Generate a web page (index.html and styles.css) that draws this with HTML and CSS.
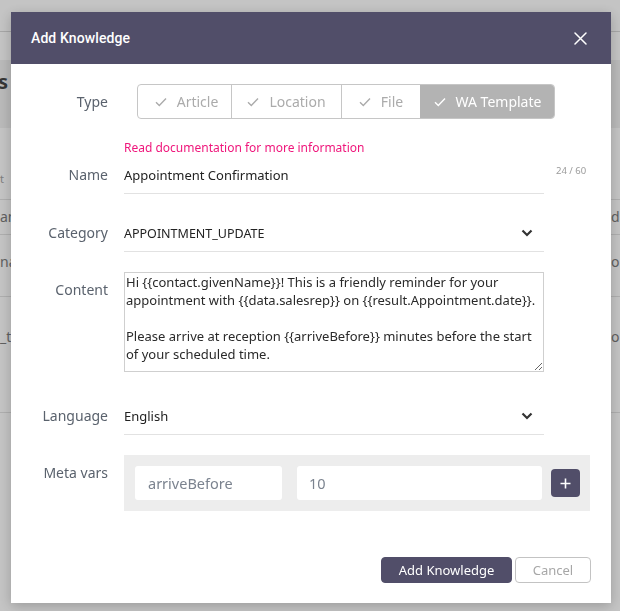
FILE: index.html
```html
<!DOCTYPE html>
<html lang="en">
<head>
<meta charset="utf-8">
<title>Add Knowledge</title>
<link rel="stylesheet" href="styles.css">
</head>
<body>
<div class="page">
  <div class="topbar"></div>
  <div class="page-head">
    <div class="page-head-inner"><h1 class="page-title">Bases</h1></div>
  </div>
  <div class="bg-row bg-row--head"><span class="bg-left bg-muted">t</span></div>
  <div class="bg-row bg-row--a"><span class="bg-left">ann</span><span class="bg-right">d.</span></div>
  <div class="bg-row bg-row--b"><span class="bg-left">nam</span><span class="bg-right">or</span></div>
  <div class="bg-row bg-row--c"><span class="bg-left">_te</span><span class="bg-right">or</span></div>
</div>

<div class="overlay">
  <div class="modal">
    <div class="modal-header">
      <h2 class="modal-title">Add Knowledge</h2>
      <button class="close-btn" type="button" aria-label="Close">
        <svg width="13" height="13" viewBox="0 0 13 13"><path d="M1 1L12 12M12 1L1 12" stroke="#fff" stroke-width="1.5" fill="none" stroke-linecap="round"/></svg>
      </button>
    </div>

    <div class="modal-body">
      <div class="row row--type">
        <span class="label label--type">Type</span>
        <div class="segments">
          <span class="seg seg--article"><svg class="check" width="12" height="10" viewBox="0 0 12 10"><path d="M1 5.2L4.3 8.5L11 1.5" stroke="currentColor" stroke-width="1.4" fill="none"/></svg>Article</span>
          <span class="seg seg--location"><svg class="check" width="12" height="10" viewBox="0 0 12 10"><path d="M1 5.2L4.3 8.5L11 1.5" stroke="currentColor" stroke-width="1.4" fill="none"/></svg>Location</span>
          <span class="seg seg--file"><svg class="check" width="12" height="10" viewBox="0 0 12 10"><path d="M1 5.2L4.3 8.5L11 1.5" stroke="currentColor" stroke-width="1.4" fill="none"/></svg>File</span>
          <span class="seg seg--wa seg--active"><svg class="check" width="12" height="10" viewBox="0 0 12 10"><path d="M1 5.2L4.3 8.5L11 1.5" stroke="currentColor" stroke-width="1.4" fill="none"/></svg>WA Template</span>
        </div>
      </div>

      <div class="row row--hint">
        <span class="label"></span>
        <a class="doc-link" href="#">Read documentation for more information</a>
      </div>

      <div class="row">
        <span class="label">Name</span>
        <div class="field"><span class="field-value">Appointment Confirmation</span></div>
        <span class="counter">24 / 60</span>
      </div>

      <div class="row row--category">
        <span class="label">Category</span>
        <div class="field field--select">
          <span class="field-value field-value--caps">APPOINTMENT_UPDATE</span>
          <svg class="chevron" width="12" height="8" viewBox="0 0 12 8"><path d="M1.5 1.5L6 6L10.5 1.5" stroke="#333" stroke-width="2.2" fill="none"/></svg>
        </div>
      </div>

      <div class="row row--content">
        <span class="label">Content</span>
        <textarea class="content-area">Hi {{contact.givenName}}! This is a friendly reminder for your appointment with {{data.salesrep}} on {{result.Appointment.date}}.

Please arrive at reception {{arriveBefore}} minutes before the start of your scheduled time.</textarea>
      </div>

      <div class="row row--language">
        <span class="label">Language</span>
        <div class="field field--select">
          <span class="field-value">English</span>
          <svg class="chevron" width="12" height="8" viewBox="0 0 12 8"><path d="M1.5 1.5L6 6L10.5 1.5" stroke="#333" stroke-width="2.2" fill="none"/></svg>
        </div>
      </div>

      <div class="row row--meta">
        <span class="label">Meta vars</span>
        <div class="meta">
          <div class="meta-input meta-input--key">arriveBefore</div>
          <div class="meta-input meta-input--value">10</div>
          <button class="add-btn" type="button" aria-label="Add">
            <svg width="11" height="11" viewBox="0 0 11 11"><path d="M5.5 0.5V10.5M0.5 5.5H10.5" stroke="#fff" stroke-width="1.6" fill="none"/></svg>
          </button>
        </div>
      </div>
    </div>

    <div class="modal-footer">
      <button class="btn btn-primary" type="button">Add Knowledge</button>
      <button class="btn btn-secondary" type="button">Cancel</button>
    </div>
  </div>
</div>
</body>
</html>
```

FILE: styles.css
```css
* { box-sizing: border-box; }

html, body {
  margin: 0;
  padding: 0;
}

body {
  width: 620px;
  height: 611px;
  overflow: hidden;
  position: relative;
  background: #ffffff;
  font-family: "Noto Sans", "Open Sans", sans-serif;
}

/* ---------- background page ---------- */
.page {
  width: 620px;
}

.topbar {
  height: 32px;
  border-bottom: 1px solid #d9d9d9;
}

.page-head {
  margin-top: 28px;
  height: 68px;
  background: #f2f2f2;
  padding-top: 8px;
}

.page-head-inner {
  width: 8px;
  display: flex;
  justify-content: flex-end;
}

.page-title {
  margin: 0;
  white-space: nowrap;
  font-size: 20px;
  line-height: 28px;
  font-weight: 700;
  color: #474747;
}

.bg-row {
  display: flex;
  border-bottom: 1px solid #e3e3e3;
  font-size: 14px;
  color: #7d7d7d;
  white-space: nowrap;
}

.bg-left { width: 611px; flex: none; overflow: visible; }
.bg-right { flex: none; }
.bg-muted { font-size: 11px; color: #a3a3a3; }

.bg-row--head { height: 72px; padding-top: 43px; }
.bg-row--a { height: 35px; padding-top: 7px; }
.bg-row--b { height: 62px; padding-top: 17px; }
.bg-row--c { height: 116px; padding-top: 30px; }

/* ---------- overlay + modal ---------- */
.overlay {
  position: fixed;
  inset: 0;
  background: rgba(0, 0, 0, 0.23);
  padding: 12px 0 0 11px;
}

.modal {
  width: 600px;
  background: #ffffff;
  box-shadow: 0 3px 12px rgba(0, 0, 0, 0.22);
}

.modal-header {
  height: 52px;
  background: #514e69;
  display: flex;
  align-items: center;
  justify-content: space-between;
  padding: 0 24px 0 20px;
}

.modal-title {
  margin: 0;
  font-family: Roboto, "Noto Sans", sans-serif;
  font-weight: 500;
  font-size: 14px;
  letter-spacing: 0.1px;
  color: #ffffff;
}

.close-btn {
  border: 0;
  background: none;
  padding: 0;
  width: 13px;
  height: 13px;
  display: flex;
}

.modal-body {
  padding: 20px 21px 0 0;
}

.row {
  display: flex;
  align-items: flex-start;
}

.label {
  width: 97px;
  flex: none;
  margin-right: 16px;
  text-align: right;
  line-height: 36px;
  font-size: 14px;
  color: #5a626d;
}

.label--type { line-height: 35px; }

/* type segments */
.segments {
  display: flex;
  height: 35px;
  margin-left: 13px;
  border: 1px solid #c6c6c6;
  border-radius: 4px;
  overflow: hidden;
}

.seg {
  display: flex;
  align-items: center;
  justify-content: center;
  font-size: 14px;
  color: #ababab;
  border-left: 1px solid #c6c6c6;
}

.seg:first-child { border-left: 0; }

.seg--article { width: 93px; padding-left: 4px; }
.seg--location { width: 110px; }
.seg--file { width: 79px; }
.seg--wa { width: 134px; }

.seg--active {
  background: #b3b3b3;
  color: #ffffff;
  border-left-color: #b3b3b3;
}

.check {
  margin-right: 10px;
  flex: none;
}

/* hint link */
.row--hint { margin-top: 20px; }

.doc-link {
  font-size: 12px;
  line-height: 18px;
  color: #ef167b;
  text-decoration: none;
}

/* text fields */
.field {
  width: 420px;
  height: 37px;
  flex: none;
  display: flex;
  align-items: center;
  justify-content: space-between;
  border-bottom: 1px solid #e2e2e2;
}

.field-value {
  font-size: 13px;
  color: #222222;
}

.field-value--caps { font-size: 12.5px; }

.field--select { padding-right: 11px; }

.counter {
  margin-left: 12px;
  margin-top: 8px;
  line-height: 12px;
  font-size: 9.5px;
  color: #9b9b9b;
}

.row--category { margin-top: 21px; }
.row--content { margin-top: 20px; }
.row--language { margin-top: 26px; }
.row--meta { margin-top: 20px; }

.content-area {
  display: block;
  width: 420px;
  height: 100px;
  margin: 0;
  border: 1px solid #cfcfcf;
  border-radius: 0;
  padding: 0 1px;
  font-family: "Noto Sans", "Open Sans", sans-serif;
  font-size: 13px;
  line-height: 18px;
  color: #2a2a2a;
  resize: vertical;
  overflow: hidden;
}

/* meta vars */
.meta {
  flex: 1;
  height: 56px;
  background: #ededed;
  display: flex;
  align-items: center;
  gap: 9px;
  padding: 0 10px 0 11px;
}

.meta-input {
  height: 34px;
  background: #ffffff;
  border-radius: 3px;
  display: flex;
  align-items: center;
  padding: 0 13px;
  font-size: 14.5px;
  color: #7b838f;
}

.meta-input--key {
  width: 147px;
  margin-right: 6px;
}

.meta-input--value {
  flex: 1;
  padding-left: 12px;
}

.add-btn {
  width: 29px;
  height: 28px;
  flex: none;
  border: 0;
  padding: 0;
  border-radius: 4px;
  background: #514e69;
  display: flex;
  align-items: center;
  justify-content: center;
}

/* footer */
.modal-footer {
  display: flex;
  justify-content: flex-end;
  gap: 3px;
  padding: 46px 20px 20px;
}

.btn {
  height: 26px;
  padding: 0;
  border-radius: 4px;
  font-family: "Noto Sans", "Open Sans", sans-serif;
  font-size: 13px;
  line-height: 24px;
}

.btn-primary {
  width: 131px;
  background: #514e69;
  border: 1px solid #514e69;
  color: #ffffff;
}

.btn-secondary {
  width: 76px;
  background: #ffffff;
  border: 1px solid #c3c3c3;
  color: #a7a7a7;
}
```
